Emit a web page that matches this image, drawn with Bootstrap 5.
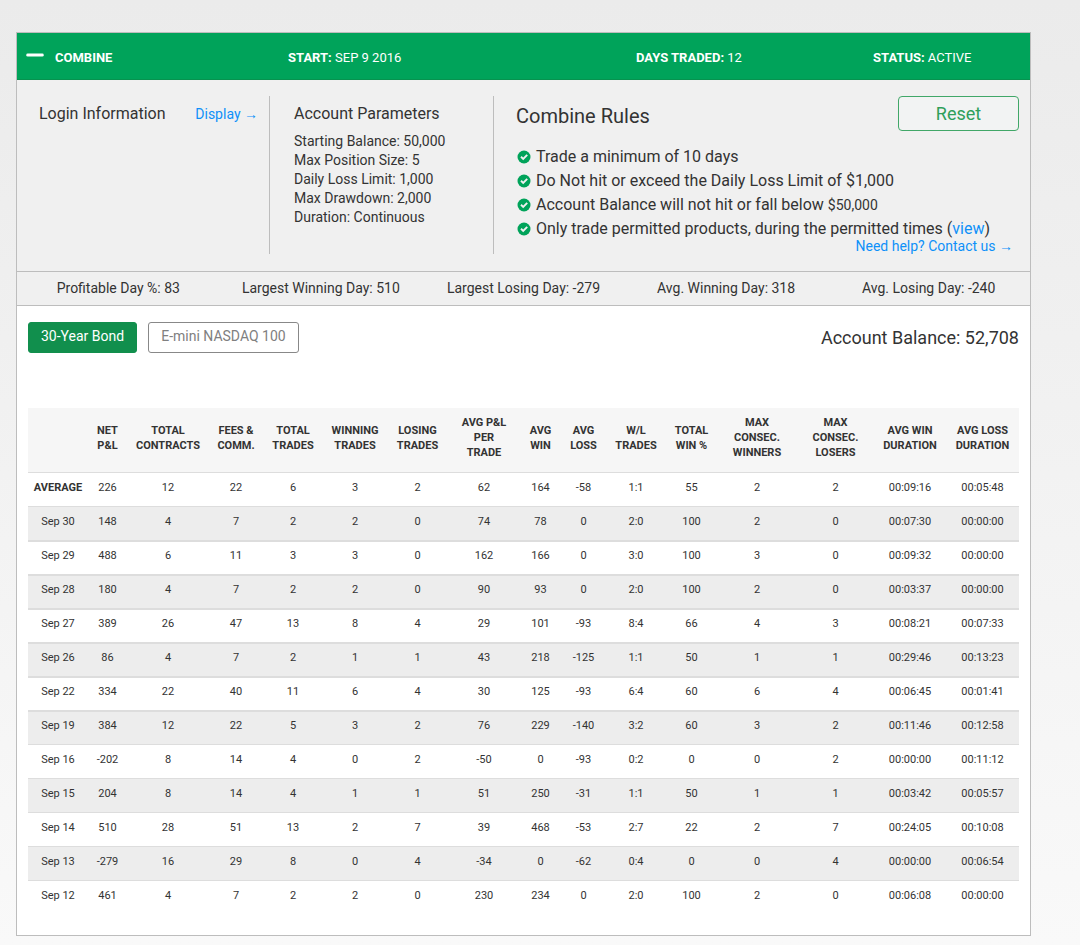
<!DOCTYPE html>
<html lang="en">
<head>
<meta charset="utf-8">
<meta name="viewport" content="width=device-width, initial-scale=1">
<title>Combine</title>
<link href="https://cdn.jsdelivr.net/npm/bootstrap@5.3.0/dist/css/bootstrap.min.css" rel="stylesheet">
<style>
body{font-family:Roboto,"Liberation Sans",sans-serif;font-size:14px;line-height:19px;color:#333;background:linear-gradient(#ebebeb,#f9f9f9) fixed;min-height:100vh}
.page-wrap{padding:32px 49px 9px 16px}
.panel{border:1px solid #bdbdbd;background:#fff}
.panel a{color:#0e90f9;text-decoration:none}
.top-bar{display:grid;grid-template-columns:271fr 348fr 237fr 157fr;background:#00a35a;border-bottom:1px solid #07924f;color:#fff;font-size:13px;height:47px;align-items:center}
.top-bar > div{padding-top:2px}
.collapse-btn{width:18px;height:12px;margin:0 11px 5px 9px}
.info{display:grid;grid-template-columns:253fr 224fr 536fr;background:#f0f0f0;padding:16px 0 17px}
.info h2,.info h3{font-weight:400;margin:0}
.info h3{font-size:16px;line-height:20px}
.info h2{font-size:20px;line-height:24px;padding-top:4px}
.login-col{padding:8px 11px 0 22px;border-right:1px solid #bdbdbd}
.login-col a{line-height:21px}
.param-col{padding:8px 0 0 24px;border-right:1px solid #bdbdbd}
.rules-col{padding:0 11px 0 22px}
.rules-col li{font-size:16px;line-height:20px;margin-bottom:4px}
.rules-col li:last-child{margin-bottom:0}
.rules-col li svg{width:14px;height:14px;margin:0 5px 0 1px;flex:none}
.help-link{margin-right:6px;line-height:15px}
.reset-btn{width:121px;height:35px;border:1px solid #41a768;border-radius:4px;background:#f2f3f3;color:#2f9f5a;font-size:18px}
.stats{background:#f0f0f0;border-top:1px solid #bdbdbd;border-bottom:1px solid #bdbdbd;line-height:33px}
.results-area{padding:16px 11px 21px}
.market-bar{gap:11px;margin-bottom:55px}
.market-btn{height:31px;border-radius:3px;font-size:14px;padding:0 12px 3px;border:1px solid #888;background:#fff;color:#808080}
.market-btn.active-market{background:#118f4d;border-color:#118f4d;color:#fff}
.balance{font-size:18px;line-height:31px}
.results{table-layout:fixed;width:100%;font-size:11px;line-height:15px;text-align:center}
.results th,.results td{padding:7px 0 11px;border-top:1px solid #ddd;white-space:nowrap}
.results thead th{background:#f6f6f6;border:0;height:64px;padding:0 0 4px;vertical-align:middle;font-weight:700}
.results tbody tr:nth-child(even){background:#ededed}
.results tbody tr:nth-child(n+3):nth-child(-n+8) > *{border-top-width:2px;padding-top:6px}
.results tbody th{font-weight:400}
.results tbody tr:first-child th{font-weight:700}
.w39{width:39px}.w41{width:41px}.w45{width:45px}.w51{width:51px}.w54{width:54px}.w60{width:60px}.w61{width:61px}.w64{width:64px}.w72{width:72px}.w73{width:73px}.w77{width:77px}.w80{width:80px}.w82{width:82px}
</style>
</head>
<body>
<svg class="d-none" xmlns="http://www.w3.org/2000/svg"><symbol id="check" viewBox="0 0 14 14"><circle cx="7" cy="7" r="6.5" fill="#00a35a"/><path d="M4 6.8 6.2 8.9 10.2 4.8" fill="none" stroke="#f0f0f0" stroke-width="1.9"/></symbol></svg>
<div class="page-wrap">
<main class="panel">
  <header class="top-bar">
    <div class="d-flex align-items-center"><button type="button" class="btn p-0 border-0 d-flex align-items-center collapse-btn" aria-label="Collapse"><svg width="18" height="4" viewBox="0 0 18 4"><rect x=".3" y=".4" width="17.4" height="3.2" rx="1.4" fill="#fff"/></svg></button><strong>COMBINE</strong></div>
    <div><strong>START:</strong> SEP 9 2016</div>
    <div><strong>DAYS TRADED:</strong> 12</div>
    <div><strong>STATUS:</strong> ACTIVE</div>
  </header>

  <section class="info">
    <div class="login-col d-flex justify-content-between align-items-start">
      <h3>Login Information</h3><a href="#login">Display →</a>
    </div>
    <div class="param-col">
      <h3 class="mb-2">Account Parameters</h3>
      <div>Starting Balance: 50,000</div>
      <div>Max Position Size: 5</div>
      <div>Daily Loss Limit: 1,000</div>
      <div>Max Drawdown: 2,000</div>
      <div>Duration: Continuous</div>
    </div>
    <div class="rules-col">
      <div class="d-flex justify-content-between align-items-center mb-3">
        <h2>Combine Rules</h2><button type="button" class="reset-btn">Reset</button>
      </div>
      <ul class="list-unstyled mb-0">
        <li class="d-flex align-items-center"><svg aria-hidden="true"><use href="#check"/></svg><span>Trade a minimum of 10 days</span></li>
        <li class="d-flex align-items-center"><svg aria-hidden="true"><use href="#check"/></svg><span>Do Not hit or exceed the Daily Loss Limit of $1,000</span></li>
        <li class="d-flex align-items-center"><svg aria-hidden="true"><use href="#check"/></svg><span>Account Balance will not hit or fall below <small>$50,000</small></span></li>
        <li class="d-flex align-items-center"><svg aria-hidden="true"><use href="#check"/></svg><span>Only trade permitted products, during the permitted times (<a href="#times">view</a>)</span></li>
      </ul>
      <div class="help-link text-end"><a href="#contact">Need help? Contact us →</a></div>
    </div>
  </section>

  <section class="stats row g-0 text-center">
    <div class="col">Profitable Day %: 83</div>
    <div class="col">Largest Winning Day: 510</div>
    <div class="col">Largest Losing Day: -279</div>
    <div class="col">Avg. Winning Day: 318</div>
    <div class="col">Avg. Losing Day: -240</div>
  </section>

  <section class="results-area">
    <div class="market-bar d-flex align-items-center">
      <button type="button" class="market-btn active-market">30-Year Bond</button>
      <button type="button" class="market-btn">E-mini NASDAQ 100</button>
      <div class="balance ms-auto">Account Balance: 52,708</div>
    </div>
    <table class="results">
      <colgroup><col class="w60"><col class="w39"><col class="w82"><col class="w54"><col class="w60"><col class="w64"><col class="w61"><col class="w72"><col class="w41"><col class="w45"><col class="w60"><col class="w51"><col class="w80"><col class="w77"><col class="w72"><col class="w73"></colgroup>
      <thead><tr><th><th>NET<br>P&amp;L<th>TOTAL<br>CONTRACTS<th>FEES &amp;<br>COMM.<th>TOTAL<br>TRADES<th>WINNING<br>TRADES<th>LOSING<br>TRADES<th>AVG P&amp;L<br>PER<br>TRADE<th>AVG<br>WIN<th>AVG<br>LOSS<th>W/L<br>TRADES<th>TOTAL<br>WIN %<th>MAX<br>CONSEC.<br>WINNERS<th>MAX<br>CONSEC.<br>LOSERS<th>AVG WIN<br>DURATION<th>AVG LOSS<br>DURATION</tr></thead>
      <tbody>
      <tr><th>AVERAGE<td>226<td>12<td>22<td>6<td>3<td>2<td>62<td>164<td>-58<td>1:1<td>55<td>2<td>2<td>00:09:16<td>00:05:48</tr>
      <tr><th>Sep 30<td>148<td>4<td>7<td>2<td>2<td>0<td>74<td>78<td>0<td>2:0<td>100<td>2<td>0<td>00:07:30<td>00:00:00</tr>
      <tr><th>Sep 29<td>488<td>6<td>11<td>3<td>3<td>0<td>162<td>166<td>0<td>3:0<td>100<td>3<td>0<td>00:09:32<td>00:00:00</tr>
      <tr><th>Sep 28<td>180<td>4<td>7<td>2<td>2<td>0<td>90<td>93<td>0<td>2:0<td>100<td>2<td>0<td>00:03:37<td>00:00:00</tr>
      <tr><th>Sep 27<td>389<td>26<td>47<td>13<td>8<td>4<td>29<td>101<td>-93<td>8:4<td>66<td>4<td>3<td>00:08:21<td>00:07:33</tr>
      <tr><th>Sep 26<td>86<td>4<td>7<td>2<td>1<td>1<td>43<td>218<td>-125<td>1:1<td>50<td>1<td>1<td>00:29:46<td>00:13:23</tr>
      <tr><th>Sep 22<td>334<td>22<td>40<td>11<td>6<td>4<td>30<td>125<td>-93<td>6:4<td>60<td>6<td>4<td>00:06:45<td>00:01:41</tr>
      <tr><th>Sep 19<td>384<td>12<td>22<td>5<td>3<td>2<td>76<td>229<td>-140<td>3:2<td>60<td>3<td>2<td>00:11:46<td>00:12:58</tr>
      <tr><th>Sep 16<td>-202<td>8<td>14<td>4<td>0<td>2<td>-50<td>0<td>-93<td>0:2<td>0<td>0<td>2<td>00:00:00<td>00:11:12</tr>
      <tr><th>Sep 15<td>204<td>8<td>14<td>4<td>1<td>1<td>51<td>250<td>-31<td>1:1<td>50<td>1<td>1<td>00:03:42<td>00:05:57</tr>
      <tr><th>Sep 14<td>510<td>28<td>51<td>13<td>2<td>7<td>39<td>468<td>-53<td>2:7<td>22<td>2<td>7<td>00:24:05<td>00:10:08</tr>
      <tr><th>Sep 13<td>-279<td>16<td>29<td>8<td>0<td>4<td>-34<td>0<td>-62<td>0:4<td>0<td>0<td>4<td>00:00:00<td>00:06:54</tr>
      <tr><th>Sep 12<td>461<td>4<td>7<td>2<td>2<td>0<td>230<td>234<td>0<td>2:0<td>100<td>2<td>0<td>00:06:08<td>00:00:00</tr>
      </tbody>
    </table>
  </section>
</main>
</div>
<script src="https://cdn.jsdelivr.net/npm/bootstrap@5.3.0/dist/js/bootstrap.bundle.min.js"></script>
</body>
</html>
